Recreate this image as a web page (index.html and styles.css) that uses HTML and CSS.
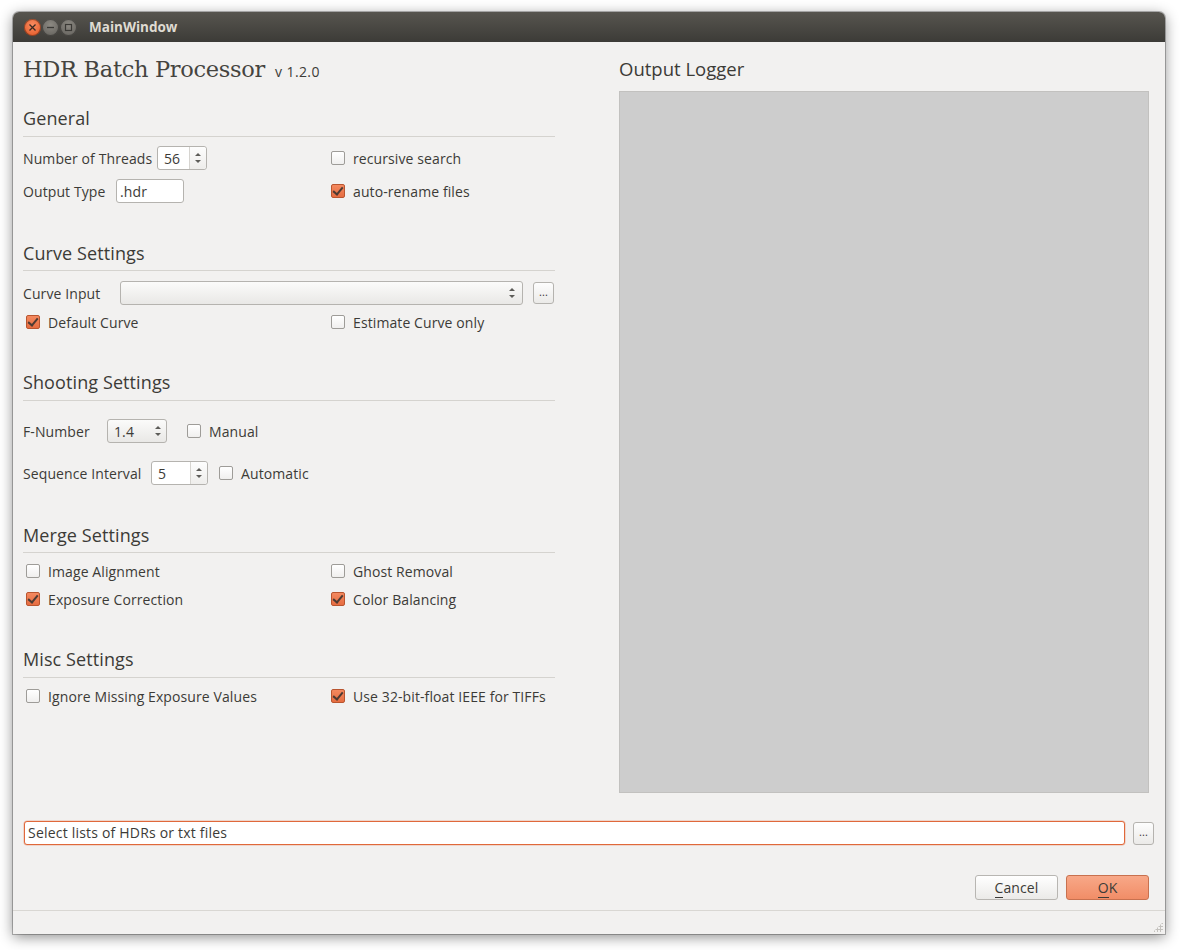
FILE: index.html
```html
<!DOCTYPE html>
<html>
<head>
<meta charset="utf-8">
<link rel="stylesheet" href="styles.css">
</head>
<body>
<div class="window">
  <div class="titlebar">
    <div class="wbtn close"><svg width="9" height="9" viewBox="0 0 9 9"><path d="M1.5 1.5L7.5 7.5M7.5 1.5L1.5 7.5" stroke="#3a2a22" stroke-width="1.3"/></svg></div>
    <div class="wbtn min"><svg width="9" height="9" viewBox="0 0 9 9"><path d="M1 4.5H8" stroke="#3a3935" stroke-width="1.3"/></svg></div>
    <div class="wbtn max"><svg width="9" height="9" viewBox="0 0 9 9"><rect x="1.5" y="1.5" width="6" height="6" fill="none" stroke="#3a3935" stroke-width="1.2"/></svg></div>
    <div class="wtitle">MainWindow</div>
  </div>
  <div class="content">
    <div class="left">
      <div class="apptitle"><span class="appname">HDR Batch Processor</span><span class="ver">v 1.2.0</span></div>

      <div class="sec-title s-general">General</div>
      <div class="grid g-general">
        <div class="row"><span class="lbl l-threads">Number of Threads</span><div class="spin w50"><span class="val">56</span><span class="arrows sep"><i class="up"></i><i class="dn"></i></span></div></div>
        <div class="row"><label class="cb"><span class="box"></span>recursive search</label></div>
        <div class="row r2"><span class="lbl l-out">Output Type</span><div class="field w68">.hdr</div></div>
        <div class="row r2"><label class="cb"><span class="box on"></span>auto-rename files</label></div>
      </div>

      <div class="sec-title s-curve">Curve Settings</div>
      <div class="curve-row">
        <span class="lbl lbl-curve">Curve Input</span>
        <div class="combo wide"><span class="arrows"><i class="up"></i><i class="dn"></i></span></div>
        <div class="dots">...</div>
      </div>
      <div class="grid g-curve2">
        <div class="row"><label class="cb cb-left"><span class="box on"></span>Default Curve</label></div>
        <div class="row"><label class="cb"><span class="box"></span>Estimate Curve only</label></div>
      </div>

      <div class="sec-title s-shoot">Shooting Settings</div>
      <div class="shoot">
        <div class="row"><span class="lbl lbl-f">F-Number</span><div class="combo w60"><span class="val">1.4</span><span class="arrows"><i class="up"></i><i class="dn"></i></span></div><label class="cb cb-inline"><span class="box"></span>Manual</label></div>
        <div class="row"><span class="lbl l-seq">Sequence Interval</span><div class="spin w57"><span class="val">5</span><span class="arrows sep"><i class="up"></i><i class="dn"></i></span></div><label class="cb cb-inline2"><span class="box"></span>Automatic</label></div>
      </div>

      <div class="sec-title s-merge">Merge Settings</div>
      <div class="grid g-merge">
        <div class="row"><label class="cb cb-left"><span class="box"></span>Image Alignment</label></div>
        <div class="row"><label class="cb"><span class="box"></span>Ghost Removal</label></div>
        <div class="row"><label class="cb cb-left"><span class="box on"></span>Exposure Correction</label></div>
        <div class="row"><label class="cb"><span class="box on"></span>Color Balancing</label></div>
      </div>

      <div class="sec-title s-misc">Misc Settings</div>
      <div class="grid g-misc">
        <div class="row"><label class="cb cb-left"><span class="box"></span>Ignore Missing Exposure Values</label></div>
        <div class="row"><label class="cb"><span class="box on"></span>Use 32-bit-float IEEE for TIFFs</label></div>
      </div>
    </div>
    <div class="right">
      <div class="logtitle">Output Logger</div>
      <div class="logbox"></div>
    </div>
  </div>
  <div class="filerow">
    <div class="filefield">Select lists of HDRs or txt files</div>
    <div class="dots dots2">...</div>
  </div>
  <div class="btnrow">
    <div class="btn"><u>C</u>ancel</div>
    <div class="btn ok"><u>O</u>K</div>
  </div>
  <div class="statusbar"><span class="grip"></span></div>
</div>
</body>
</html>
```
FILE: styles.css
```css
html, body { margin: 0; padding: 0; }
body {
  width: 1184px; height: 950px; background: #ffffff; overflow: hidden;
  font-family: "Open Sans", "Noto Sans", sans-serif; font-size: 14px; color: #3c3b37;
  letter-spacing: 0.1px;
}
.window {
  position: relative;
  margin: 12px 0 0 13px; width: 1152px; height: 922px;
  background: #f2f1f0; border-radius: 6px 6px 0 0;
  box-shadow: 0 3px 14px rgba(0,0,0,0.45), 0 0 0 1px rgba(0,0,0,0.25);
  display: flex; flex-direction: column;
}
.titlebar {
  height: 30px; flex: none; display: flex; align-items: center;
  background: linear-gradient(#57554f, #3c3b37);
  border-radius: 6px 6px 0 0; padding-left: 11px;
}
.wbtn {
  width: 17px; height: 17px; border-radius: 50%; margin-right: 1px;
  display: flex; align-items: center; justify-content: center;
  box-shadow: inset 0 0 0 1px rgba(0,0,0,0.35);
}
.close { background: radial-gradient(circle at 50% 35%, #f88d62, #e0521f); }
.min, .max { background: radial-gradient(circle at 50% 35%, #8d8a83, #5e5c57); }
.wtitle { margin-left: 11px; color: #dfdbd2; font-weight: bold; font-size: 13.5px; letter-spacing: 0; }
.content { display: flex; height: 752px; flex: none; }
.left { width: 532px; margin-left: 10px; }
.right { width: 530px; margin-left: 64px; }
.apptitle { height: 54px; display: flex; align-items: baseline; padding-top: 14px; box-sizing: border-box; }
.appname { font-family: "DejaVu Serif", serif; font-size: 22.5px; color: #45443f; letter-spacing: -0.3px; }
.ver { font-size: 14px; margin-left: 10px; color: #3c3b37; letter-spacing: 0.4px; }
.sec-title {
  font-size: 18px; line-height: 24px; padding-bottom: 5px; border-bottom: 1px solid #d5d3cf;
  color: #3c3b37;
}
.s-general { margin-top: 10px; padding-bottom: 6px; }
.s-curve { margin-top: 38px; }
.s-shoot { margin-top: 36px; padding-bottom: 6px; }
.s-merge { margin-top: 38px; }
.s-misc { margin-top: 36px; padding-bottom: 6px; }
.grid { display: grid; grid-template-columns: 308px 1fr; }
.row { height: 24px; display: flex; align-items: center; }
.g-general { margin-top: 9px; row-gap: 9px; }
.g-curve2 { margin-top: 5px; }
.g-merge { margin-top: 6px; row-gap: 4px; }
.g-misc { margin-top: 6px; }
.lbl { white-space: nowrap; flex: none; }
.l-threads { width: 134px; }
.l-out { width: 93px; }
.l-seq { width: 128px; }
.cb { display: flex; align-items: center; white-space: nowrap; }
.cb-left { margin-left: 3px; }
.box {
  width: 12px; height: 12px; border: 1px solid #9e9c98; border-radius: 2px; margin-right: 8px;
  background: linear-gradient(#ffffff, #f0efee); flex: none; position: relative;
}
.box.on { background: linear-gradient(#f4895f, #e66d41); border-color: #b9552f; }
.box.on::after {
  content: ""; position: absolute; left: 3px; top: 0px; width: 4px; height: 8px;
  border: solid #4d3b33; border-width: 0 2px 2px 0; transform: rotate(40deg);
}
.spin, .field, .combo {
  height: 22px; border: 1px solid #b5b3af; border-radius: 3px; box-sizing: content-box;
  display: flex; align-items: center; position: relative; flex: none;
}
.spin, .field { background: #ffffff; }
.combo { background: linear-gradient(#fbfbfa, #e9e8e6); }
.w50 { width: 48px; }
.w57 { width: 55px; }
.w60 { width: 58px; }
.w68 { width: 66px; }
.field { text-indent: 3px; }
.val { padding-left: 6px; flex: 1; }
.arrows { width: 16px; height: 22px; position: relative; flex: none; }
.arrows.sep { border-left: 1px solid #d6d4d0; background: linear-gradient(#fdfdfd, #eeedeb); border-radius: 0 3px 3px 0; }
.arrows i { position: absolute; left: 5px; width: 0; height: 0; border-left: 3px solid transparent; border-right: 3px solid transparent; }
.arrows .up { top: 6px; border-bottom: 3px solid #5d5c58; }
.arrows .dn { top: 13px; border-top: 3px solid #5d5c58; }
.curve-row { margin-top: 10px; height: 24px; display: flex; align-items: center; }
.lbl-curve { width: 97px; }
.combo.wide { width: 401px; justify-content: flex-end; }
.combo.wide .arrows { margin-right: 2px; }
.dots {
  width: 19px; height: 20px; margin-left: 10px; border: 1px solid #b5b3af; border-radius: 3px;
  background: linear-gradient(#fdfdfd, #ebeae8); font-size: 11px; line-height: 18px; text-align: center;
}
.shoot { margin-top: 18px; display: flex; flex-direction: column; row-gap: 18px; }
.lbl-f { width: 84px; }
.cb-inline { margin-left: 20px; }
.cb-inline2 { margin-left: 11px; }
.logtitle { height: 49px; line-height: 54px; font-size: 18.5px; letter-spacing: 0; }
.logbox { height: 700px; background: #cdcdcd; border: 1px solid #c2c1bf; }
.filerow { display: flex; align-items: center; margin-left: 11px; height: 26px; margin-top: 26px; }
.filefield {
  width: 1096px; height: 22px; border: 1px solid #e0683a; border-radius: 3px; background: #fff;
  line-height: 22px; padding-left: 3px; box-shadow: 0 0 0 0.5px rgba(224,104,58,0.4);
  letter-spacing: 0.2px;
}
.dots2 { margin-left: 8px; height: 21px; }
.btnrow { display: flex; justify-content: flex-end; gap: 8px; margin-top: 29px; padding-right: 16px; height: 25px; }
.btn {
  width: 81px; height: 23px; border: 1px solid #b8b6b2; border-radius: 3px; text-align: center; line-height: 23px;
  background: linear-gradient(#ffffff, #ebeae8); font-size: 14px;
}
.btn u { text-decoration: none; border-bottom: 1px solid #3c3b37; }
.btn.ok { background: linear-gradient(#f8a888, #f18d67); border-color: #c8714f; }
.statusbar { margin-top: 10px; flex: 1; border-top: 1px solid #d9d7d3; position: relative; }
.grip {
  position: absolute; right: 2px; bottom: 2px; width: 10px; height: 10px;
  background-image: radial-gradient(circle, #c4c2be 1px, transparent 1.2px); background-size: 3px 3px;
  clip-path: polygon(100% 0, 100% 100%, 0 100%);
}
```
